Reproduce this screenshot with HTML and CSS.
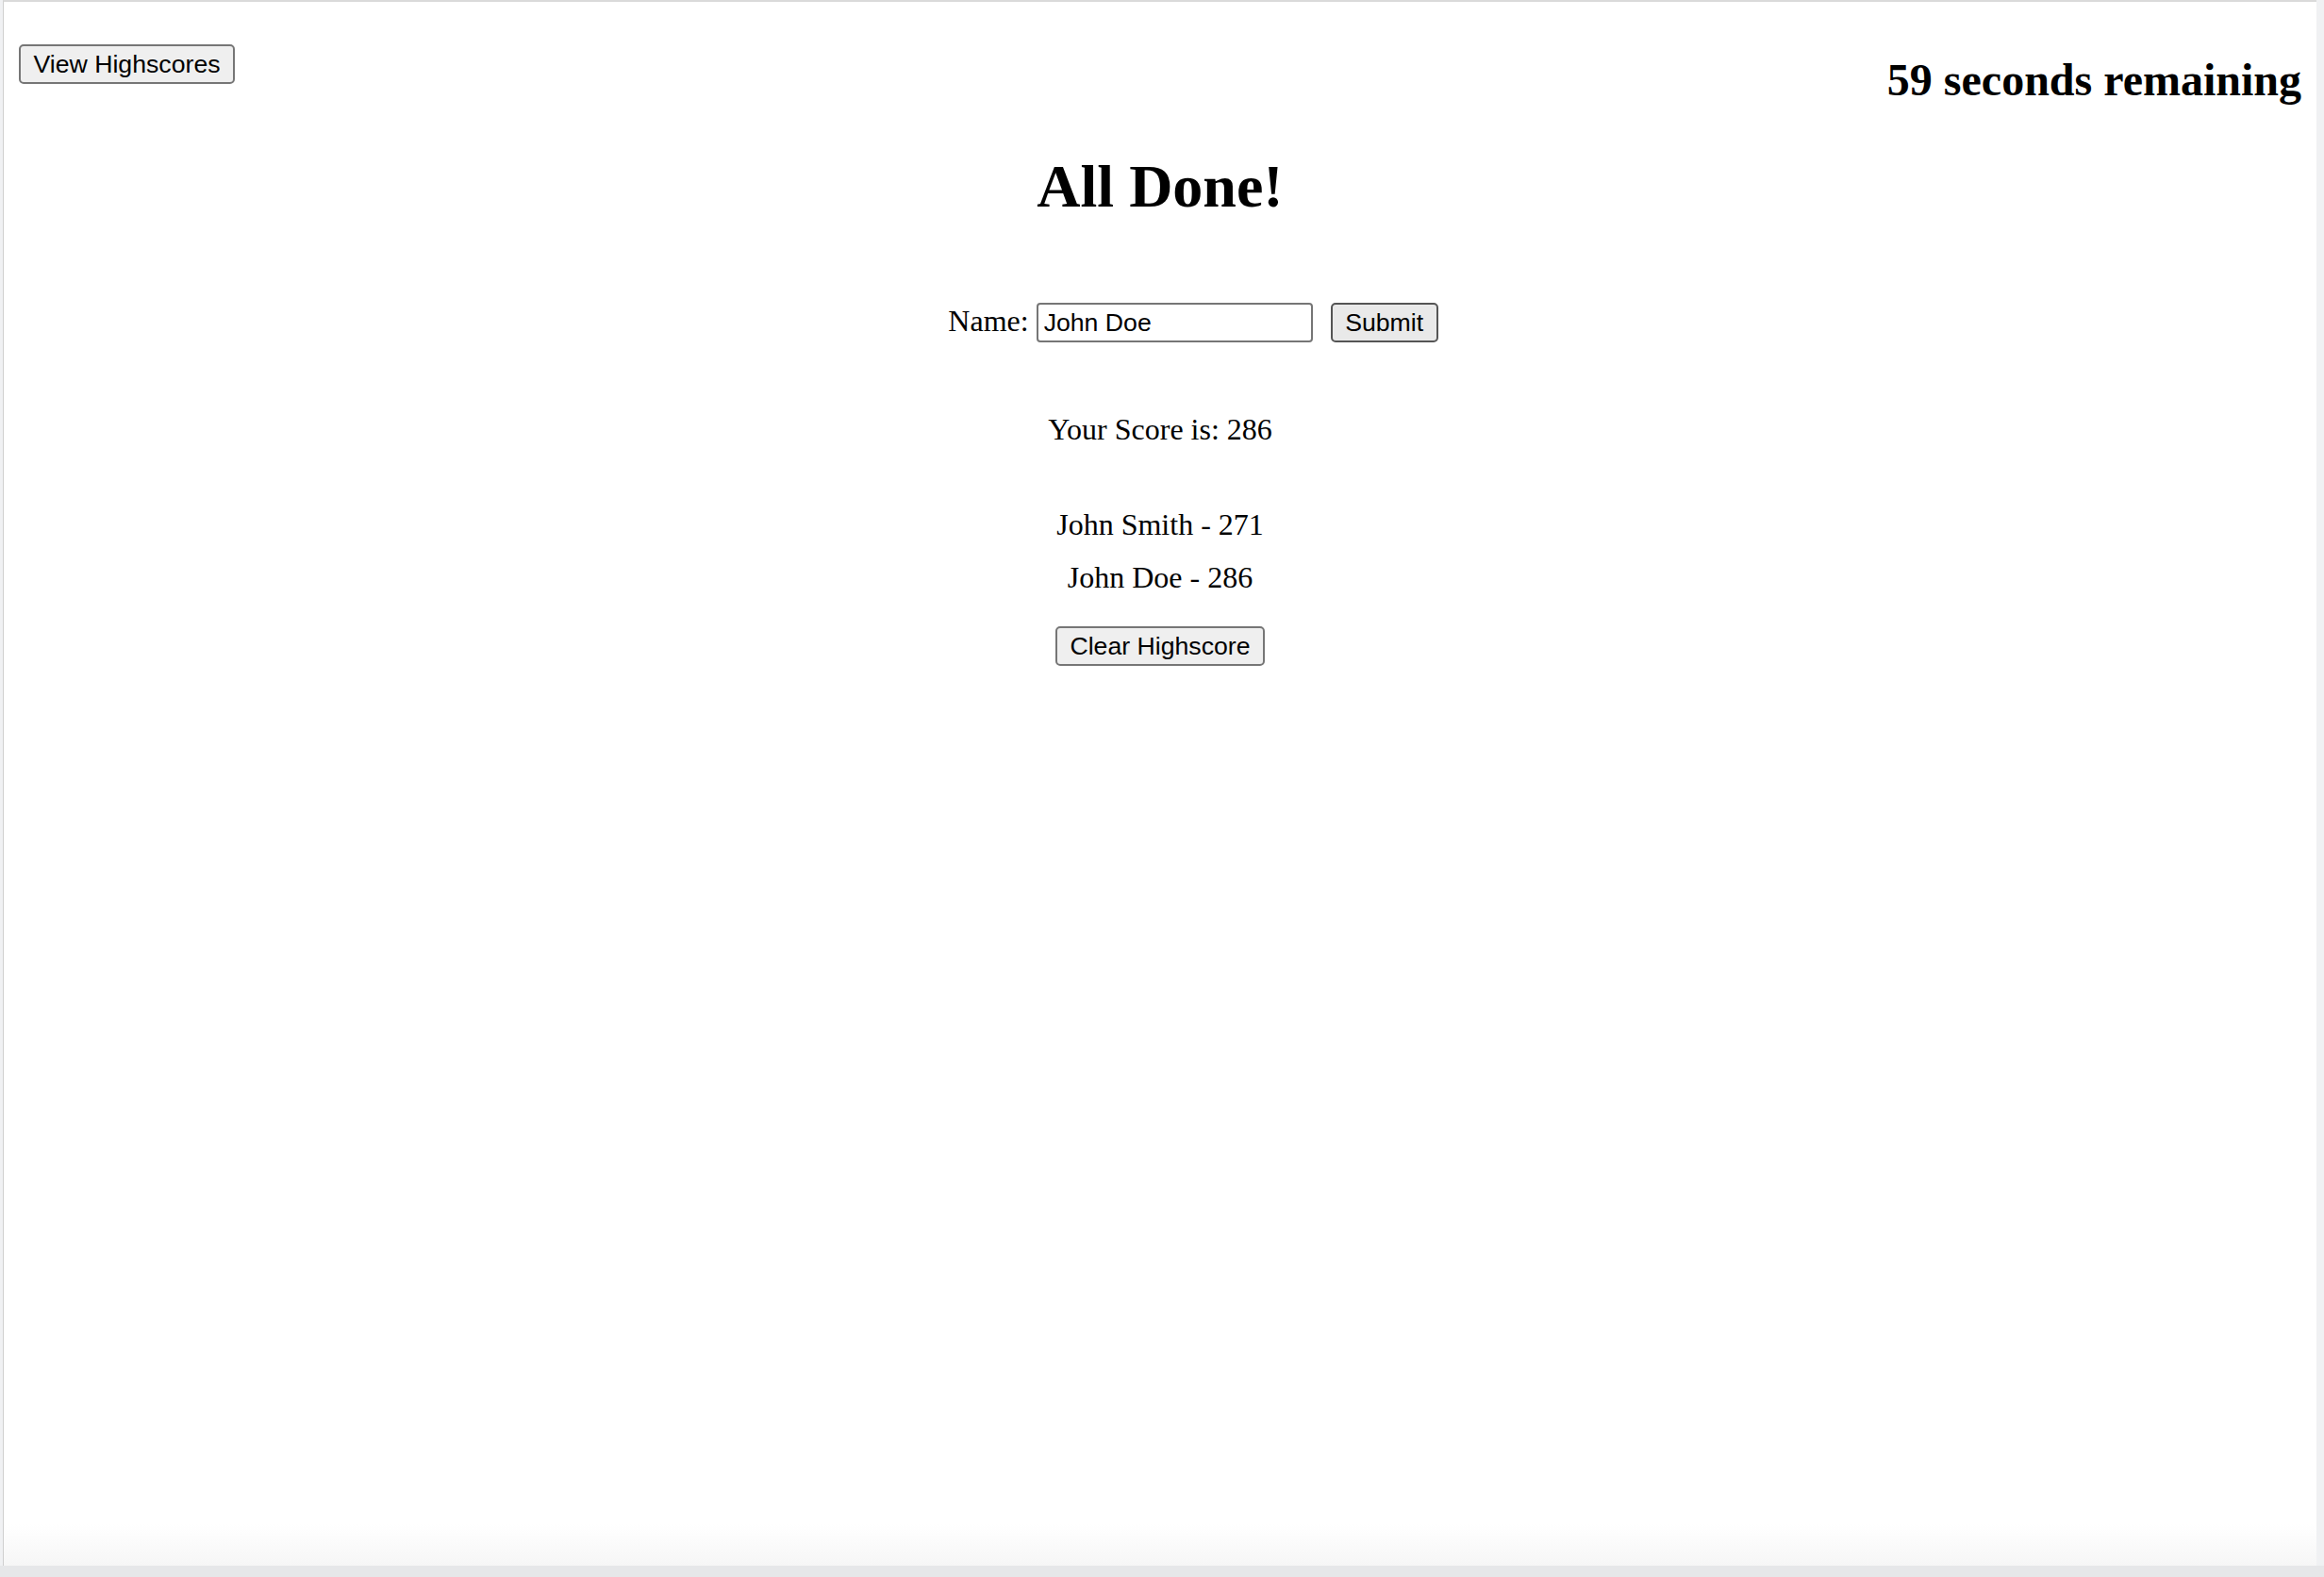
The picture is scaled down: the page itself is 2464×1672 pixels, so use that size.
FILE: index.html
```html
<!DOCTYPE html>
<html lang="en">
<head>
<meta charset="utf-8">
<title>Code Quiz</title>
<link rel="stylesheet" href="styles.css">
</head>
<body>
<div class="window">
  <header class="topbar">
    <button class="btn btn-view" type="button">View Highscores</button>
    <h2 class="timer">59 seconds remaining</h2>
  </header>
  <main class="done">
    <h1 class="title">All Done!</h1>
    <form class="name-row">
      <label class="name-label" for="name">Name:</label>
      <input class="name-input" id="name" type="text" value="John Doe">
      <button class="btn btn-submit" type="button">Submit</button>
    </form>
    <p class="score">Your Score is: 286</p>
    <ul class="scores">
      <li>John Smith - 271</li>
      <li>John Doe - 286</li>
    </ul>
    <button class="btn btn-clear" type="button">Clear Highscore</button>
  </main>
</div>
</body>
</html>
```

FILE: styles.css
```css
html, body {
  margin: 0;
  padding: 0;
}
body {
  width: 2464px;
  height: 1672px;
  overflow: hidden;
  background: linear-gradient(to bottom, #f0f1f3 1660px, #e6e7e9 1660px);
  font-family: "Liberation Serif", "Times New Roman", serif;
  font-size: 32px;
  color: #000;
}
.window {
  box-sizing: border-box;
  margin: 0 8px 0 3px;
  height: 1660px;
  border-top: 2px solid #dadada;
  border-left: 1px solid #cfcfcf;
  background: linear-gradient(to bottom, #ffffff calc(100% - 44px), #f6f6f6);
  padding: 16px;
}
.topbar {
  display: flex;
  justify-content: space-between;
  align-items: flex-start;
}
.btn {
  box-sizing: border-box;
  height: 42px;
  padding: 0 13.5px;
  font-family: "Liberation Sans", Arial, sans-serif;
  font-size: 26.67px;
  color: #000;
  background: #efefef;
  border: 2px solid #767676;
  border-radius: 5px;
  line-height: normal;
}
.btn-view {
  margin-top: 29px;
}
.timer {
  margin: 39px 0 0;
  font-size: 48px;
  line-height: 56px;
  font-weight: bold;
}
.done {
  display: flex;
  flex-direction: column;
  align-items: center;
}
.title {
  margin: 48px 0 0;
  font-size: 64px;
  line-height: 74px;
  font-weight: bold;
}
.name-row {
  margin: 86px 0 0;
  padding-left: 70px;
  display: flex;
  align-items: baseline;
}
.name-label {
  line-height: 37px;
  margin-right: 8px;
}
.name-input {
  box-sizing: border-box;
  width: 293px;
  height: 42px;
  padding: 0 6px;
  font-family: "Liberation Sans", Arial, sans-serif;
  font-size: 26.67px;
  color: #000;
  border: 2px solid #767676;
  border-radius: 4px;
  background: #fff;
}
.btn-submit {
  margin-left: 19px;
  width: 114px;
  padding: 0;
  background: #e9e9e9;
  border-color: #555;
}
.score {
  margin: 74px 0 0;
  line-height: 37px;
}
.scores {
  margin: 64px 0 0;
  padding: 0;
  list-style: none;
  display: flex;
  flex-direction: column;
  align-items: center;
  gap: 19px;
}
.scores li {
  line-height: 37px;
}
.btn-clear {
  margin-top: 33px;
}
```
